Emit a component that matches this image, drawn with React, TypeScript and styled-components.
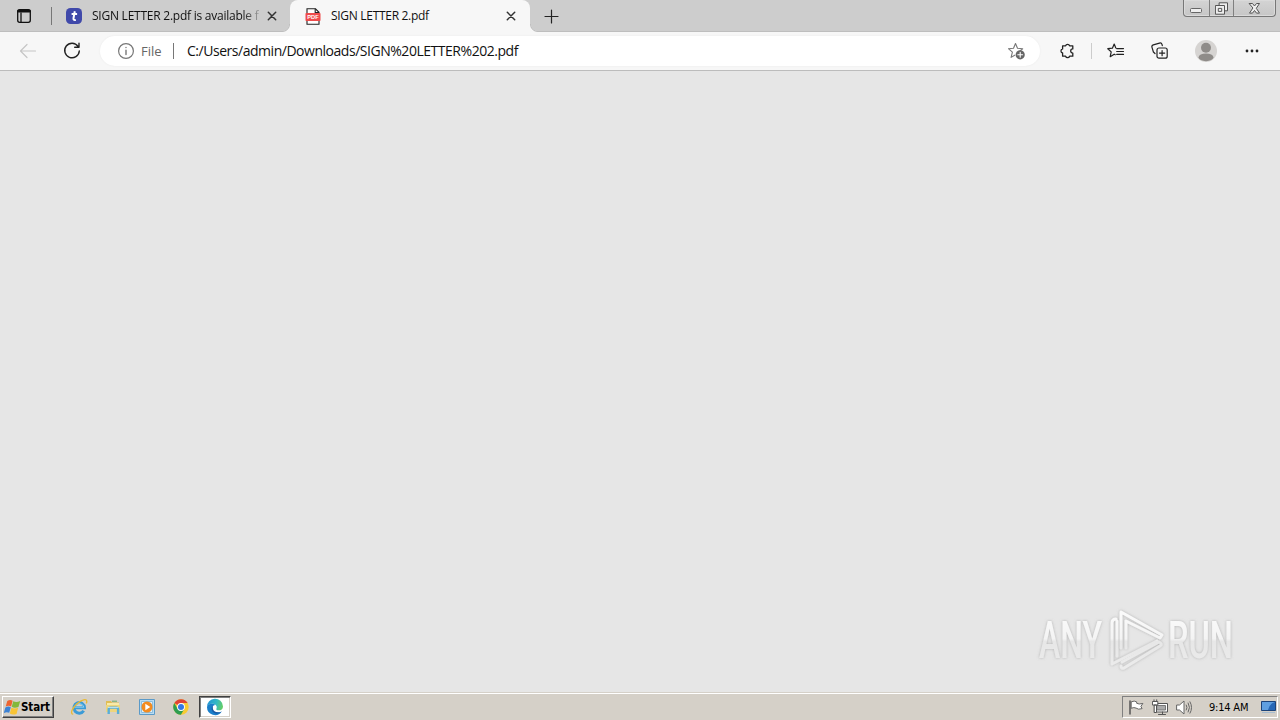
import type { ReactNode } from "react";
import styled, { createGlobalStyle } from "styled-components";

const GlobalStyle = createGlobalStyle`
  * {
    box-sizing: border-box;
  }
  body {
    margin: 0;
    overflow: hidden;
    font-family: "Open Sans", "Noto Sans", sans-serif;
    color: #111;
  }
  svg {
    display: block;
    flex: none;
  }
`;

const Screen = styled.div`
  display: flex;
  flex-direction: column;
  width: 1280px;
  height: 720px;
  background: #e6e6e6;
`;

const TabStrip = styled.div`
  display: flex;
  height: 32px;
  background: #cdcdcd;
  box-shadow: inset 0 -1px #bebebe;
`;

const TabActions = styled.div`
  display: flex;
  align-items: center;
  width: 52px;
  padding-left: 16px;
  gap: 19px;
`;

const Divider = styled.div<{ $height: number; $color: string }>`
  width: 1px;
  height: ${(p) => p.$height}px;
  background: ${(p) => p.$color};
  flex: none;
`;

const Tab = styled.div<{ $active?: boolean; $width: number }>`
  position: relative;
  display: flex;
  align-items: center;
  width: ${(p) => p.$width}px;
  padding: 0 14px 0 ${(p) => (p.$active ? 15 : 14)}px;
  border-radius: 8px 8px 0 0;
  background: ${(p) => (p.$active ? "#f7f7f7" : "transparent")};

  &::before,
  &::after {
    content: "";
    display: ${(p) => (p.$active ? "block" : "none")};
    position: absolute;
    bottom: 0;
    width: 8px;
    height: 8px;
  }
  &::before {
    left: -8px;
    background: radial-gradient(circle at 0 0, transparent 7px, #bebebe 7.5px, #f7f7f7 8.5px);
  }
  &::after {
    right: -8px;
    background: radial-gradient(circle at 100% 0, transparent 7px, #bebebe 7.5px, #f7f7f7 8.5px);
  }
`;

const TabTitle = styled.div<{ $fade?: boolean; $spacing: number }>`
  flex: 1;
  margin: 0 8px 0 10px;
  white-space: nowrap;
  font-size: 12px;
  line-height: 20px;
  letter-spacing: ${(p) => p.$spacing}px;
  ${(p) => p.$fade && "mask-image: linear-gradient(90deg, #000 150px, transparent 172px);"}
`;

const NewTab = styled.div`
  display: flex;
  align-items: center;
  padding-left: 14px;
`;

const WindowControls = styled.div`
  display: flex;
  width: 93px;
  height: 17px;
  margin: 0 4px 0 auto;
  border: 1px solid #777;
  border-top: 0;
  border-radius: 0 0 4px 4px;
  background: linear-gradient(#d4d4d4, #c6c6c6);
  box-shadow: inset 0 0 0 1px #dadada;
`;

const WindowButton = styled.div<{ $width: number }>`
  display: flex;
  align-items: center;
  justify-content: center;
  width: ${(p) => p.$width}px;
  & + & {
    border-left: 1px solid #808080;
  }
`;

const Toolbar = styled.div`
  display: flex;
  align-items: center;
  height: 39px;
  padding-left: 18px;
  background: #f7f7f7;
  border-bottom: 1px solid #bcbcbc;
`;

const NavButtons = styled.div`
  display: flex;
  gap: 24px;
  width: 82px;
`;

const AddressBar = styled.div`
  display: flex;
  align-items: center;
  width: 940px;
  height: 30px;
  padding: 0 14px 0 17px;
  border-radius: 15px;
  background: #fff;
  box-shadow: 0 0 2px #e8e8e8;
`;

const Scheme = styled.span`
  width: 31px;
  margin: 0 1px 0 6px;
  font-size: 13px;
  letter-spacing: 0;
  color: #666;
`;

const Url = styled.span`
  flex: 1;
  margin-left: 13px;
  font-size: 14px;
  line-height: 20px;
  padding-bottom: 1px;
  white-space: nowrap;
  letter-spacing: -0.47px;
  color: #111;
`;

const ToolbarActions = styled.div`
  display: flex;
  align-items: center;
  margin-left: 19px;
`;

const ActionSlot = styled.div<{ $width: number }>`
  display: flex;
  align-items: center;
  width: ${(p) => p.$width}px;
`;

const Page = styled.main`
  display: flex;
  flex: 1;
  align-items: flex-end;
  justify-content: flex-end;
  padding: 0 40px 16px 0;
  background: #e6e6e6;
`;

const Taskbar = styled.footer`
  display: flex;
  align-items: center;
  height: 28px;
  padding: 1px 2px 0;
  background: #d5d0c8;
  border-top: 1px solid #d5d0c8;
  box-shadow: inset 0 1px #fff;
  font-family: "DejaVu Sans Condensed", "DejaVu Sans", sans-serif;
`;

const StartButton = styled.div`
  display: flex;
  align-items: center;
  width: 52px;
  height: 22px;
  padding-left: 1px;
  border: 1px solid;
  border-color: #fff #404040 #404040 #fff;
  box-shadow: inset -1px -1px #808080;
  font-size: 11.5px;
  font-weight: bold;
  font-stretch: condensed;
  letter-spacing: -0.1px;
  color: #000;
`;

const QuickLaunch = styled.div`
  display: flex;
  align-items: center;
  gap: 2px;
  margin-left: 9px;
`;

const LaunchItem = styled.div<{ $active?: boolean }>`
  display: flex;
  align-items: center;
  justify-content: center;
  width: 32px;
  height: 22px;
  border: 1px solid transparent;
  ${(p) =>
    p.$active &&
    `
    background: #fff;
    border-color: #404040 #fff #fff #404040;
    box-shadow: inset 1px 1px #808080, inset -1px -1px #d5d0c8;
  `}
`;

const Tray = styled.div`
  display: flex;
  align-items: center;
  width: 156px;
  height: 22px;
  margin-left: auto;
  padding-left: 5px;
  gap: 7px;
  border: 1px solid;
  border-color: #808080 #fff #fff #808080;
`;

const Clock = styled.span`
  width: 44px;
  margin-left: 9px;
  font-size: 11px;
  font-stretch: condensed;
  white-space: nowrap;
  letter-spacing: -0.2px;
  color: #000;
`;

type IconProps = {
  size?: number;
  color?: string;
  width?: number;
  children: ReactNode;
};

const LineIcon = ({ size = 16, color = "#222", width = 1.2, children }: IconProps) => (
  <svg
    width={size}
    height={size}
    viewBox={`0 0 ${size} ${size}`}
    fill="none"
    stroke={color}
    strokeWidth={width}
    strokeLinecap="round"
    strokeLinejoin="round"
  >
    {children}
  </svg>
);

const CloseIcon = () => (
  <LineIcon size={10} width={1.5} color="#333">
    <path d="M1.3 1.3 8.7 8.7M8.7 1.3 1.3 8.7" />
  </LineIcon>
);

const TabActionsIcon = () => (
  <LineIcon width={1.3} color="#111">
    <rect x="1.7" y="1.7" width="12.6" height="12.6" rx="2" />
    <path d="M2.5 3.2h11" strokeWidth="2.8" />
    <path d="M5 5v9" />
  </LineIcon>
);

const TumblrIcon = () => (
  <svg width="16" height="16" viewBox="0 0 16 16">
    <rect width="16" height="16" rx="4.5" fill="#4049aa" />
    <path
      d="M8.8 3.2 7.5 10.2Q7.1 12.5 9.8 11.9M5.6 6.1h5.5"
      fill="none"
      stroke="#fff"
      strokeWidth="2"
    />
  </svg>
);

const PdfIcon = () => (
  <svg width="16" height="17" viewBox="0 0 16 17">
    <path d="M2 .8h8.5L14 4.3v11.9H2z" fill="#fff" stroke="#222" strokeWidth="1.1" />
    <path d="M10.2.8v3.8H14" fill="none" stroke="#222" strokeWidth="1.1" />
    <rect x=".5" y="5" width="15" height="8" rx=".8" fill="#ee4b4b" />
    <text
      x="8"
      y="11.1"
      textAnchor="middle"
      fontFamily="Liberation Sans, sans-serif"
      fontSize="5.7"
      fontWeight="bold"
      fill="#fff"
    >
      PDF
    </text>
  </svg>
);

const StarAddIcon = () => (
  <LineIcon size={18} color="#777" width={1.1}>
    <path d="m7.5 1.5 2 4.8 5.2.4-3 2.4M7.5 1.5l-2 4.8-5.1.4 4 3.5-1.3 5.2 3.6-2.2" />
    <circle cx="12.2" cy="12.8" r="4.6" fill="#666" stroke="none" />
    <path d="M12.2 10.4v4.8M9.8 12.8h4.8" stroke="#fff" />
  </LineIcon>
);

const ExtensionIcon = () => (
  <LineIcon width={1.3}>
    <path d="M3.6 2.8h3a2.1 2.1 0 0 1 4 0h3.2v3.1a2.1 2.1 0 0 0 0 4.2v3.1h-3.2a2.1 2.1 0 0 1-4 0h-3V10a2.1 2.1 0 0 1 0-4.1z" />
  </LineIcon>
);

const FavoritesIcon = () => (
  <LineIcon size={18}>
    <path d="M8.8 5.9 7.2 2 5.4 6.2.8 6.7l3.4 3.2-1 4.8 4-2.5 1 .6M9.7 6.6h6.8M9.7 9.5h6.8M9.7 12.4h6.8" />
  </LineIcon>
);

const CollectionsIcon = () => (
  <LineIcon size={18}>
    <rect x="6" y="6" width="10.2" height="10.2" rx="2" />
    <path d="M11.1 8.5v5.2M8.5 11.1h5.2M4 11.5 2.4 10 1 5.4a2 2 0 0 1 1.3-2.5l6.2-1.8a2 2 0 0 1 2.5 1.3l.3 1.2" />
  </LineIcon>
);

const ProfileIcon = () => (
  <svg width="22" height="22" viewBox="0 0 22 22">
    <circle cx="11" cy="11" r="11" fill="#d6d4d2" />
    <circle cx="11" cy="7.8" r="5" fill="#8f8c89" />
    <ellipse cx="11" cy="17.3" rx="7.4" ry="3.9" fill="#8f8c89" />
  </svg>
);

const WindowsFlag = () => (
  <svg width="17" height="17" viewBox="0 0 16 16">
    <path d="M3.1 1.9q2.6-1.8 5-.3L6.7 7Q4.3 5.6 1.6 7.1z" fill="#ed6430" />
    <path d="M8.7 2q2.8 1.6 6.6-.2l-1.7 5.7Q10 9.1 7.3 7.4z" fill="#83b83b" />
    <path d="M1.3 7.9q2.7-1.5 5.1-.2L4.9 13q-2.5-1.3-5.1.3z" fill="#3c82d4" />
    <path d="M7 8.2q2.9 1.5 6.3.1L11.8 14q-3.5 1.5-6.3-.3z" fill="#f8c435" />
  </svg>
);

const ExplorerIcon = () => (
  <svg width="18" height="18" viewBox="0 0 18 18" fill="none">
    <path d="M4.3 9.7h10.2a5.3 5.3 0 1 0-.8 3" stroke="#3b9bd7" strokeWidth="3" />
    <path d="M4.3 9.2h9.6A4.9 4.9 0 0 0 5 7.8" stroke="#92d3f2" strokeWidth=".9" />
    <path d="M3.2 16.2C-.2 16.2 2 10 7 5.7s9.7-5.3 9.8-2.3q0 1-.6 2" stroke="#e9b934" strokeWidth="1.3" />
  </svg>
);

const FolderIcon = () => (
  <svg width="18" height="18" viewBox="0 0 18 18">
    <path d="M2 3h5l1 1.5h7V14H2z" fill="#e0bd55" />
    <path d="M3 5h12v4H3z" fill="#f8eaa8" />
    <path d="M8 3.2h5" stroke="#69aa6b" />
    <path d="M2 7h14v7H2z" fill="#eed57c" />
    <path d="M4.7 16v-4.8q0-1.6 1.6-1.6h6.2q1.6 0 1.6 1.6V16" fill="none" stroke="#5aaed8" strokeWidth="2.4" />
    <path d="M4 9.5h10.5" stroke="#b4e0f3" />
  </svg>
);

const MediaIcon = () => (
  <svg width="18" height="18" viewBox="0 0 18 18">
    <path d="M1.5 1.5h15v15h-15z" fill="#b9dcf2" stroke="#5b9ac8" />
    <path d="M3.5 3.5h11v11h-11z" fill="#e0f0fb" stroke="#8bbddd" />
    <circle cx="9" cy="9" r="5.5" fill="#f38b1f" />
    <path d="m7.3 5.8 5 3.2-5 3.2z" fill="#fff" />
  </svg>
);

const ChromeIcon = () => (
  <svg width="16" height="16" viewBox="0 0 16 16">
    <circle cx="8" cy="8" r="7.7" fill="#f8cb32" />
    <path d="M8 8 1.3 4.1a7.7 7.7 0 0 1 13.4 0H8z" fill="#df4335" />
    <path d="M1.3 4.1a7.7 7.7 0 0 0 6.6 11.6l3.4-5.8L8 8 4.7 10z" fill="#2e9d50" />
    <circle cx="8" cy="8" r="3.9" fill="#fff" />
    <circle cx="8" cy="8" r="3" fill="#3478e5" />
  </svg>
);

const EdgeIcon = () => (
  <svg width="18" height="18" viewBox="0 0 18 18">
    <defs>
      <linearGradient id="edgeTop" x1="0" y1=".4" x2="1" y2=".6">
        <stop stopColor="#2195d4" />
        <stop offset=".55" stopColor="#34b9c5" />
        <stop offset="1" stopColor="#67cf62" />
      </linearGradient>
    </defs>
    <path d="M1 9a8 8 0 0 1 16-.6c0 2.6-2 3.9-4.3 3.9-2 0-2.9-.8-2.3-1.6C11.8 8 9 5.8 6.3 5.8 3.4 5.8 1.2 7.5 1 9" fill="url(#edgeTop)" />
    <path d="M1 9c.3-2 2.5-3.2 4.8-3.2 1.5 0 2.8.5 3.6 1.3-3 0-4 3-2.5 5.1 2 2.9 5.7 3 8.8 1.2A8 8 0 0 1 1 9" fill="#1b7fca" />
    <path d="M7 7.8c-2.7 2-1.4 6.8 2.7 7.8 2.2.3 4.4-.5 6-2.2-4.3 2-8.6.2-8.9-3.2q0-1.5.2-2.4" fill="#185ba5" />
  </svg>
);

const FlagTrayIcon = () => (
  <LineIcon size={17} width={1} color="#666">
    <path d="M2 2v13" stroke="#555" strokeWidth="1.5" />
    <path d="M3.5 2.7q3-1.4 5.2.2v1.4q2 1.4 6.2.1l-2 3 1.2 2.2q-4 1.4-6-.5-2-1.1-4.6 0z" fill="#fff" />
  </LineIcon>
);

const NetworkTrayIcon = () => (
  <LineIcon size={17} width={1} color="#555">
    <rect x="3.5" y="4.5" width="12" height="8.5" fill="#fff" />
    <rect x="5.5" y="6.5" width="8" height="4.5" fill="#aaa" stroke="#777" />
    <path d="M6.5 15.5h7M10.5 13v2" />
    <path d="M.8 2.5h5V6h-5zM2 .8v1.5M4.7.8v1.5M2.5 6h2v7.5h-2z" fill="#fff" />
  </LineIcon>
);

const SpeakerTrayIcon = () => (
  <LineIcon size={17} width={1} color="#666">
    <path d="M1 6h2.5L8 2v13l-4.5-4H1z" fill="#fff" />
    <path d="M10.3 6q1.5 2.5 0 5M12.2 4q2.7 4.5 0 9M14 2.8q3.2 5.8 0 11.4" />
  </LineIcon>
);

const DesktopTrayIcon = () => (
  <svg width="17" height="16" viewBox="0 0 17 16">
    <path d="M1.5 2.5h14v9h-14z" fill="#2767b5" stroke="#1c4379" />
    <path d="M2 11V3h13Q9 5 8 11z" fill="#5f9fe0" />
    <path d="M2 13.5h13" stroke="#a8bdd0" />
  </svg>
);

const Watermark = () => (
  <svg width="204" height="72" viewBox="0 0 204 72">
    <defs>
      <linearGradient id="markFill" x1="0" y1="0" x2="0" y2="72" gradientUnits="userSpaceOnUse">
        <stop offset=".15" stopColor="#fafafa" />
        <stop offset=".48" stopColor="#f4f4f4" />
        <stop offset=".52" stopColor="#e7e7e7" />
        <stop offset=".9" stopColor="#ececec" />
      </linearGradient>
      <filter id="markShadow" x="-10%" y="-10%" width="120%" height="120%">
        <feDropShadow dx="0" dy="0" stdDeviation="1.5" floodColor="#858585" floodOpacity=".55" />
      </filter>
    </defs>
    <g filter="url(#markShadow)">
      <g fill="url(#markFill)" fontFamily="Roboto, sans-serif" fontSize="52" fontWeight="500">
        <text x="3" y="54" textLength="63" lengthAdjust="spacingAndGlyphs">ANY</text>
        <text x="132" y="54" textLength="65" lengthAdjust="spacingAndGlyphs">RUN</text>
      </g>
      <g fill="none" stroke="url(#markFill)" strokeWidth="3" strokeLinejoin="round" strokeLinecap="round">
        <path d="M85 44V8l41 23-2 3-34-17v27" />
        <path d="M80 15q-4 0-4 4v41l45-23M81 17v35" />
        <path d="M86 58l37-20q4 2 1 4L88 64q-3 1-3-2" />
      </g>
    </g>
  </svg>
);

const BrowserTabs = () => (
  <TabStrip>
    <TabActions>
      <TabActionsIcon />
      <Divider $height={18} $color="#777" />
    </TabActions>
    <Tab $width={238}>
      <TumblrIcon />
      <TabTitle $fade $spacing={-0.24}>SIGN LETTER 2.pdf is available f</TabTitle>
      <CloseIcon />
    </Tab>
    <Tab $width={240} $active>
      <PdfIcon />
      <TabTitle $spacing={-0.3}>SIGN LETTER 2.pdf</TabTitle>
      <CloseIcon />
    </Tab>
    <NewTab>
      <LineIcon size={15}>
        <path d="M1 7.5h13M7.5 1v13" />
      </LineIcon>
    </NewTab>
    <WindowControls>
      <WindowButton $width={25}>
        <svg width="13" height="13" viewBox="0 0 13 13">
          <rect x=".5" y="6.5" width="11" height="4" rx="1" fill="#eee" stroke="#666" />
        </svg>
      </WindowButton>
      <WindowButton $width={25}>
        <LineIcon size={13} width={1} color="#555">
          <path d="M4.5.8h8v8h-8z" fill="#eee" />
          <path d="M.8 3.5h8.7v8.7H.8z" fill="#eee" />
          <path d="M3.7 6.4h3v3h-3z" />
        </LineIcon>
      </WindowButton>
      <WindowButton $width={42}>
        <LineIcon size={13} width={1} color="#555">
          <path d="M1.5 1.5h3l2 2.5 2-2.5h3L8.3 6.3l3.2 4.8h-3l-2-2.6-2 2.6h-3l3.2-4.8z" fill="#eee" />
        </LineIcon>
      </WindowButton>
    </WindowControls>
  </TabStrip>
);

const BrowserToolbar = () => (
  <Toolbar>
    <NavButtons>
      <LineIcon size={20} color="#c6c6c6">
        <path d="M17.5 10h-15M9 3.5 2.5 10 9 16.5" />
      </LineIcon>
      <LineIcon size={20} width={1.4}>
        <path d="M16 5.3A7.3 7.3 0 1 0 17.3 10M17 2.3v4h-4.3" />
      </LineIcon>
    </NavButtons>
    <AddressBar>
      <LineIcon size={18} color="#777">
        <circle cx="9" cy="9" r="7.4" />
        <path d="M9 8.2v4.4M9 5.4v.2" strokeWidth="1.4" />
      </LineIcon>
      <Scheme>File</Scheme>
      <Divider $height={16} $color="#777" />
      <Url>C:/Users/admin/Downloads/SIGN%20LETTER%202.pdf</Url>
      <StarAddIcon />
    </AddressBar>
    <ToolbarActions>
      <ActionSlot $width={32}>
        <ExtensionIcon />
      </ActionSlot>
      <ActionSlot $width={16}>
        <Divider $height={16} $color="#ccc" />
      </ActionSlot>
      <ActionSlot $width={44}>
        <FavoritesIcon />
      </ActionSlot>
      <ActionSlot $width={44}>
        <CollectionsIcon />
      </ActionSlot>
      <ActionSlot $width={49}>
        <ProfileIcon />
      </ActionSlot>
      <svg width="16" height="4" viewBox="0 0 16 4" fill="#222">
        <circle cx="3" cy="2" r="1.4" />
        <circle cx="8" cy="2" r="1.4" />
        <circle cx="13" cy="2" r="1.4" />
      </svg>
    </ToolbarActions>
  </Toolbar>
);

const WindowsTaskbar = () => (
  <Taskbar>
    <StartButton>
      <WindowsFlag />
      Start
    </StartButton>
    <QuickLaunch>
      <LaunchItem>
        <ExplorerIcon />
      </LaunchItem>
      <LaunchItem>
        <FolderIcon />
      </LaunchItem>
      <LaunchItem>
        <MediaIcon />
      </LaunchItem>
      <LaunchItem>
        <ChromeIcon />
      </LaunchItem>
      <LaunchItem $active>
        <EdgeIcon />
      </LaunchItem>
    </QuickLaunch>
    <Tray>
      <FlagTrayIcon />
      <NetworkTrayIcon />
      <SpeakerTrayIcon />
      <Clock>9:14 AM</Clock>
      <DesktopTrayIcon />
    </Tray>
  </Taskbar>
);

const App = () => {
  return (
    <Screen>
      <GlobalStyle />
      <BrowserTabs />
      <BrowserToolbar />
      <Page>
        <Watermark />
      </Page>
      <WindowsTaskbar />
    </Screen>
  );
};

export default App;
